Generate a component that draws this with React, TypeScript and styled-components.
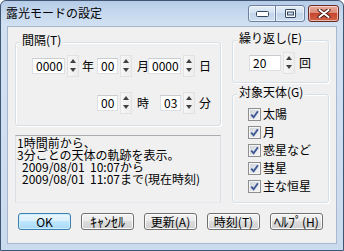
import React from "react";
import styled, { createGlobalStyle } from "styled-components";

const FONT = `"Noto Sans CJK JP", "Noto Sans CJK SC", "Noto Sans", sans-serif`;

const Global = createGlobalStyle`
  html, body { margin: 0; padding: 0; background: #ffffff; }
  body { font-family: ${FONT}; }
  * { box-sizing: border-box; }
`;

const Window = styled.div`
  width: 344px;
  height: 251px;
  border: 1px solid #3f5573;
  border-radius: 6px 6px 0 0;
  background: linear-gradient(to bottom, #b5cce7 0px, #c6d8ee 12px, #d2e1f2 25px, #cbdbee 100%);
  display: flex;
  flex-direction: column;
  overflow: hidden;
  font-family: ${FONT};
  color: #000;
`;

const TitleBar = styled.div`
  height: 25px;
  display: flex;
  align-items: flex-start;
  padding: 4px 4px 0 5px;
`;

const Title = styled.span`
  font-size: 12px;
  line-height: 16px;
  color: #000;
  white-space: nowrap;
`;

const CaptionButtons = styled.div`
  margin-left: auto;
  display: flex;
  align-items: flex-start;
`;

type CapKind = "left" | "right" | "close";

const CapBtn = styled.div<{ $w: number; $kind: CapKind }>`
  width: ${(p) => p.$w}px;
  height: 17px;
  margin-left: ${(p) => (p.$kind === "close" ? 3 : p.$kind === "right" ? -1 : 0)}px;
  border: 1px solid ${(p) => (p.$kind === "close" ? "#6b2a22" : "#6b819f")};
  border-radius: ${(p) =>
    p.$kind === "left" ? "3px 0 0 3px" : p.$kind === "right" ? "0 3px 3px 0" : "3px"};
  background: ${(p) =>
    p.$kind === "close"
      ? "linear-gradient(to bottom, #e9a99b 0%, #dc8b78 45%, #c7452f 50%, #d0634a 100%)"
      : "linear-gradient(to bottom, #e3ecf7 0%, #d5e2f1 45%, #c3d5eb 50%, #cfdef0 100%)"};
  box-shadow: inset 0 0 0 1px rgba(255, 255, 255, 0.55);
  display: flex;
  align-items: center;
  justify-content: center;
`;

const Client = styled.div`
  flex: 1;
  margin: 0 6px 6px;
  border: 1px solid #a7b8ce;
  background: #f0f0f0;
  display: flex;
  flex-direction: column;
  padding: 13px 7px 0 7px;
`;

const Panels = styled.div`
  display: grid;
  grid-template-columns: 206px 97px;
  column-gap: 11px;
`;

const Column = styled.div<{ $top?: number; $gap: number }>`
  display: flex;
  flex-direction: column;
  margin-top: ${(p) => p.$top ?? 0}px;
  gap: ${(p) => p.$gap}px;
`;

const Group = styled.div<{ $h: number; $pt: number; $pl: number; $gap?: number }>`
  position: relative;
  height: ${(p) => p.$h}px;
  border: 1px solid #d5dfe5;
  border-radius: 3px;
  box-shadow: inset 1px 1px 0 #ffffff, 1px 1px 0 #ffffff;
  padding: ${(p) => p.$pt}px 0 0 ${(p) => p.$pl}px;
  display: flex;
  flex-direction: column;
  gap: ${(p) => p.$gap ?? 0}px;
`;

const Legend = styled.span`
  position: absolute;
  top: -10px;
  left: 4px;
  padding: 0 2px;
  background: #f0f0f0;
  font-size: 12px;
  line-height: 14px;
  white-space: nowrap;
`;

const Row = styled.div`
  display: flex;
  align-items: center;
  height: 22px;
`;

const SpinWrap = styled.div<{ $ml?: number }>`
  display: flex;
  align-items: center;
  gap: 2px;
  margin-left: ${(p) => p.$ml ?? 0}px;
`;

const Field = styled.div<{ $w: number }>`
  width: ${(p) => p.$w}px;
  height: 16px;
  background: #ffffff;
  border: 1px solid #dcdfe4;
  border-top-color: #c9ccd1;
  font-size: 12px;
  line-height: 14px;
  padding-left: 3px;
  white-space: nowrap;
  overflow: hidden;
`;

const Spinner = styled.div`
  width: 12px;
  height: 22px;
  border: 1px solid #e2e2e2;
  background: linear-gradient(to right, #f6f6f6, #ededed);
  display: flex;
  flex-direction: column;
  justify-content: space-between;
  align-items: center;
  padding: 3px 0 4px;
`;

const Arrow = styled.span<{ $dir: "up" | "down" }>`
  width: 0;
  height: 0;
  border-left: 3px solid transparent;
  border-right: 3px solid transparent;
  ${(p) =>
    p.$dir === "up"
      ? "border-bottom: 4px solid #404040;"
      : "border-top: 4px solid #404040;"}
`;

const Unit = styled.span<{ $ml: number; $w?: number }>`
  margin-left: ${(p) => p.$ml}px;
  width: ${(p) => p.$w ?? 12}px;
  font-size: 12px;
  line-height: 14px;
  white-space: nowrap;
`;

const CheckRow = styled.div`
  display: flex;
  align-items: center;
  gap: 2px;
  height: 18px;
`;

const CheckBoxBox = styled.span`
  width: 13px;
  height: 13px;
  border: 1px solid #8e8f8f;
  background: linear-gradient(135deg, #cdd1d7 0%, #e4e6e9 55%, #f7f7f7 100%);
  box-shadow: inset 0 0 0 1px #f4f4f4;
  display: flex;
  align-items: center;
  justify-content: center;
`;

const CheckLabel = styled.span`
  font-size: 12px;
  line-height: 14px;
  white-space: nowrap;
`;

const InfoBox = styled.div`
  height: 68px;
  border: 1px solid #dbdfe6;
  border-top-color: #abadb3;
  border-bottom-color: #e3e9ef;
  background: #f0f0f0;
  padding: 1px 1px;
  font-size: 12px;
  line-height: 12px;
  overflow: hidden;
`;

const InfoLine = styled.div<{ $indent?: number }>`
  display: flex;
  padding-left: ${(p) => p.$indent ?? 0}px;
  white-space: nowrap;
`;

const DateText = styled.span`
  width: 68px;
`;

const ButtonRow = styled.div`
  display: flex;
  gap: 10px;
  margin: 10px 0 0 3px;
`;

const Button = styled.div<{ $default?: boolean }>`
  width: 53px;
  height: 17px;
  border: 1px solid ${(p) => (p.$default ? "#3c7fb1" : "#707070")};
  border-radius: 3px;
  background: ${(p) =>
    p.$default
      ? "linear-gradient(to bottom, #eaf6fd 0%, #d9f0fc 50%, #bee6fd 50%, #a7d9f5 100%)"
      : "linear-gradient(to bottom, #f2f2f2 0%, #ebebeb 50%, #dddddd 50%, #cfcfcf 100%)"};
  box-shadow: inset 0 0 0 1px ${(p) => (p.$default ? "#cdeefd" : "#fcfcfc")};
  font-size: 12px;
  line-height: 15px;
  text-align: center;
  white-space: nowrap;
`;

const Kana = styled.span`
  font-size: 14px;
  line-height: 15px;
`;

const SpinBox = ({ w, value, ml }: { w: number; value: string; ml?: number }) => (
  <SpinWrap $ml={ml}>
    <Field $w={w}>{value}</Field>
    <Spinner>
      <Arrow $dir="up" />
      <Arrow $dir="down" />
    </Spinner>
  </SpinWrap>
);

const Check = ({ label }: { label: string }) => (
  <CheckRow>
    <CheckBoxBox>
      <svg width="9" height="9" viewBox="0 0 9 9">
        <path d="M1.2 4.6 L3.6 7.2 L7.9 1.2" stroke="#3f5a94" strokeWidth="1.9" fill="none" />
      </svg>
    </CheckBoxBox>
    <CheckLabel>{label}</CheckLabel>
  </CheckRow>
);

const MinGlyph = () => (
  <svg width="13" height="6" viewBox="0 0 13 6">
    <rect x="0.5" y="0.5" width="12" height="5" rx="1" fill="#ffffff" stroke="#34465f" />
  </svg>
);

const MaxGlyph = () => (
  <svg width="11" height="9" viewBox="0 0 11 9">
    <rect x="0.5" y="0.5" width="10" height="8" rx="0.5" fill="#ffffff" stroke="#34465f" />
    <rect x="2.5" y="3" width="6" height="3" fill="#c9d8ea" stroke="#34465f" strokeWidth="1" />
  </svg>
);

const CloseGlyph = () => (
  <svg width="14" height="9" viewBox="0 0 14 9">
    <path d="M2.5 1 L11.5 8 M11.5 1 L2.5 8" stroke="#4a1a14" strokeWidth="4" strokeLinecap="round" />
    <path d="M2.5 1 L11.5 8 M11.5 1 L2.5 8" stroke="#ffffff" strokeWidth="2" strokeLinecap="round" />
  </svg>
);

export default function App() {
  return (
    <>
      <Global />
      <Window>
        <TitleBar>
          <Title>露光モードの設定</Title>
          <CaptionButtons>
            <CapBtn $w={28} $kind="left">
              <MinGlyph />
            </CapBtn>
            <CapBtn $w={30} $kind="right">
              <MaxGlyph />
            </CapBtn>
            <CapBtn $w={31} $kind="close">
              <CloseGlyph />
            </CapBtn>
          </CaptionButtons>
        </TitleBar>
        <Client>
          <Panels>
            <Column $top={2} $gap={9}>
              <Group $h={84} $pt={12} $pl={16} $gap={15}>
                <Legend>間隔(T)</Legend>
                <Row>
                  <SpinBox w={33} value="0000" />
                  <Unit $ml={3}>年</Unit>
                  <SpinBox w={21} value="00" ml={3} />
                  <Unit $ml={5} $w={11}>月</Unit>
                  <SpinBox w={33} value="0000" />
                  <Unit $ml={4}>日</Unit>
                </Row>
                <Row>
                  <SpinBox w={21} value="00" ml={65} />
                  <Unit $ml={5}>時</Unit>
                  <SpinBox w={21} value="03" ml={11} />
                  <Unit $ml={4}>分</Unit>
                </Row>
              </Group>
              <InfoBox>
                <InfoLine>1時間前から、</InfoLine>
                <InfoLine>3分ごとの天体の軌跡を表示。</InfoLine>
                <InfoLine $indent={5}>
                  <DateText>2009/08/01</DateText>
                  <span>10:07から</span>
                </InfoLine>
                <InfoLine $indent={5}>
                  <DateText>2009/08/01</DateText>
                  <span>11:07まで(現在時刻)</span>
                </InfoLine>
              </InfoBox>
            </Column>
            <Column $gap={11}>
              <Group $h={43} $pt={11} $pl={16}>
                <Legend>繰り返し(E)</Legend>
                <Row>
                  <SpinBox w={32} value="20" />
                  <Unit $ml={4}>回</Unit>
                </Row>
              </Group>
              <Group $h={109} $pt={10} $pl={15}>
                <Legend>対象天体(G)</Legend>
                <Check label="太陽" />
                <Check label="月" />
                <Check label="惑星など" />
                <Check label="彗星" />
                <Check label="主な恒星" />
              </Group>
            </Column>
          </Panels>
          <ButtonRow>
            <Button $default>OK</Button>
            <Button>
              <Kana>ｷｬﾝｾﾙ</Kana>
            </Button>
            <Button>更新(A)</Button>
            <Button>時刻(T)</Button>
            <Button>
              <Kana>ﾍﾙﾌﾟ</Kana>(H)
            </Button>
          </ButtonRow>
        </Client>
      </Window>
    </>
  );
}
